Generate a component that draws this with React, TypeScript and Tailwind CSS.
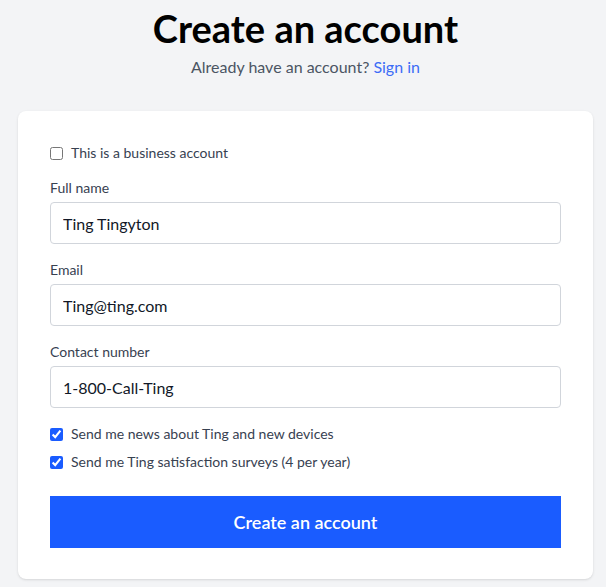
import React from "react";

const font = { fontFamily: 'Lato, "Noto Sans", sans-serif' };

function Field({ label, value, type = "text" }: { label: string; value: string; type?: string }) {
  return (
    <div className="flex flex-col">
      <label className="text-[14px] leading-5 text-[#374151] mb-[4px]">{label}</label>
      <input
        type={type}
        defaultValue={value}
        className="h-[42px] w-full rounded-[4px] border border-[#d1d5db] bg-white px-3 text-[16px] text-[#111827] outline-none"
      />
    </div>
  );
}

function Check({ label, checked }: { label: string; checked?: boolean }) {
  return (
    <label className="flex items-center gap-[8px] text-[14px] leading-5 text-[#374151]">
      <input type="checkbox" defaultChecked={checked} className="h-[13px] w-[13px] accent-[#1a5cff]" />
      {label}
    </label>
  );
}

export default function App() {
  return (
    <div className="min-h-screen bg-[#f3f4f6] overflow-hidden" style={font}>
      <div className="w-[611px] flex flex-col items-center pt-[6px]">
        <h1 className="text-[38px] font-bold leading-[44px] text-black">Create an account</h1>
        <p className="mt-[5px] text-[16px] leading-6 text-[#4b5563]">
          Already have an account? <a className="text-[#3b6cf6]">Sign in</a>
        </p>
        <form className="mt-[32px] w-[575px] rounded-lg bg-white shadow-sm px-8 pt-[32px] pb-[31px] flex flex-col">
          <Check label="This is a business account" />
          <div className="mt-[15px] flex flex-col gap-[16px]">
            <Field label="Full name" value="Ting Tingyton" />
            <Field label="Email" value="Ting@ting.com" type="email" />
            <Field label="Contact number" value="1-800-Call-Ting" />
          </div>
          <div className="mt-[16px] flex flex-col gap-[8px]">
            <Check label="Send me news about Ting and new devices" checked />
            <Check label="Send me Ting satisfaction surveys (4 per year)" checked />
          </div>
          <button
            type="button"
            className="mt-[24px] h-[52px] w-full bg-[#1a5cff] text-[18px] font-semibold text-white"
          >
            Create an account
          </button>
        </form>
      </div>
    </div>
  );
}
